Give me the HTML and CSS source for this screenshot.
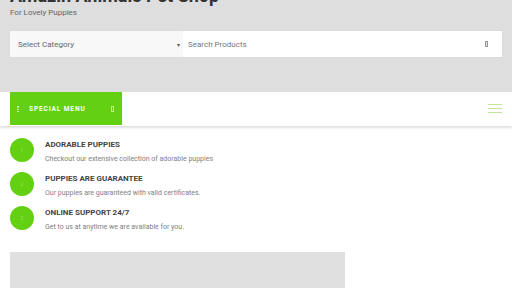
FILE: index.html
```html
<!DOCTYPE html>
<html>
<head>
<meta charset="utf-8">
<link rel="stylesheet" href="styles.css">
</head>
<body>
<header class="header">
  <h1 class="title">Amazin Animals Pet Shop</h1>
  <p class="tagline">For Lovely Puppies</p>
  <div class="search">
    <div class="select"><span>Select Category</span><span class="arrow">▾</span></div>
    <div class="input"><span>Search Products</span><span class="search-icon"></span></div>
  </div>
</header>
<nav class="nav">
  <div class="special"><span class="bars-ico"></span><span class="special-text">SPECIAL MENU</span><span class="box-ico"></span></div>
  <div class="burger"><span></span><span></span><span></span></div>
</nav>
<main class="content">
  <ul class="features">
    <li class="feature">
      <div class="dot"><span>1</span></div>
      <div class="ftext">
        <h3>ADORABLE PUPPIES</h3>
        <p>Checkout our extensive collection of adorable puppies</p>
      </div>
    </li>
    <li class="feature">
      <div class="dot"><span>2</span></div>
      <div class="ftext">
        <h3>PUPPIES ARE GUARANTEE</h3>
        <p>Our puppies are guaranteed with valid certificates.</p>
      </div>
    </li>
    <li class="feature">
      <div class="dot"><span>3</span></div>
      <div class="ftext">
        <h3>ONLINE SUPPORT 24/7</h3>
        <p>Get to us at anytime we are available for you.</p>
      </div>
    </li>
  </ul>
  <div class="banner"></div>
</main>
</body>
</html>
```
FILE: styles.css
```css
* { box-sizing: border-box; }
html, body { margin: 0; padding: 0; }
body {
  font-family: Roboto, "Liberation Sans", sans-serif;
  background: #fff;
  overflow: hidden;
  height: 288px;
}
.header {
  background: #dedede;
  height: 92px;
  padding: 0 10px;
  overflow: hidden;
}
.title {
  margin: -14px 0 0 0;
  font-size: 18px;
  line-height: 20px;
  font-weight: 700;
  color: #333;
}
.tagline {
  margin: 2px 0 0 0;
  font-size: 8px;
  line-height: 10px;
  color: #666;
}
.search {
  display: flex;
  margin-top: 13px;
  height: 26px;
  background: #fff;
  box-shadow: 0 0 1px rgba(0,0,0,0.08);
}
.select {
  width: 173px;
  background: #f8f8f8;
  display: flex;
  align-items: center;
  justify-content: space-between;
  padding: 0 3px 0 8px;
  font-size: 8px;
  color: #666;
}
.arrow { font-size: 6px; color: #555; }
.input {
  flex: 1;
  display: flex;
  align-items: center;
  justify-content: space-between;
  padding: 0 14px 0 5px;
  font-size: 8px;
  color: #777;
}
.search-icon {
  width: 3px;
  height: 6px;
  border: 1px solid #999;
  background: #ddd;
}
.nav {
  height: 34px;
  display: flex;
  justify-content: space-between;
  align-items: stretch;
  padding: 0 10px;
  background: #fff;
  box-shadow: 0 2px 2px rgba(0,0,0,0.12);
  position: relative;
}
.special {
  width: 112px;
  height: 33px;
  background: #64d012;
  display: flex;
  align-items: center;
  padding: 0 8px 0 7px;
}
.bars-ico {
  width: 2px;
  height: 6px;
  border-left: 1px dotted rgba(255,255,255,0.6);
  border-right: 1px dotted rgba(255,255,255,0.6);
}
.special-text {
  margin-left: 10px;
  flex: 1;
  font-size: 6.5px;
  font-weight: 700;
  letter-spacing: 0.9px;
  color: #fff;
}
.box-ico {
  width: 3px;
  height: 6px;
  border: 1px solid rgba(255,255,255,0.6);
}
.burger {
  width: 14px;
  display: flex;
  flex-direction: column;
  justify-content: center;
  gap: 3px;
  padding-bottom: 1px;
}
.burger span {
  display: block;
  height: 1px;
  background: #c3e59a;
}
.content { padding: 14px 10px 0 10px; }
.features { list-style: none; margin: 0; padding: 0; }
.feature {
  display: flex;
  align-items: flex-start;
  height: 34px;
}
.dot {
  width: 24px;
  height: 24px;
  border-radius: 50%;
  background: #64d012;
  display: flex;
  align-items: center;
  justify-content: center;
  margin-top: -2px;
  flex-shrink: 0;
}
.dot span { font-size: 5px; color: rgba(255,255,255,0.35); }
.ftext { margin-left: 11px; }
.ftext h3 {
  margin: 0;
  font-size: 8px;
  line-height: 10px;
  font-weight: 700;
  color: #444;
}
.ftext p {
  margin: 4px 0 0 0;
  font-size: 7px;
  line-height: 10px;
  color: #808080;
}
.banner {
  margin-top: 10px;
  width: 335px;
  height: 60px;
  background: #e0e0e0;
}
```
